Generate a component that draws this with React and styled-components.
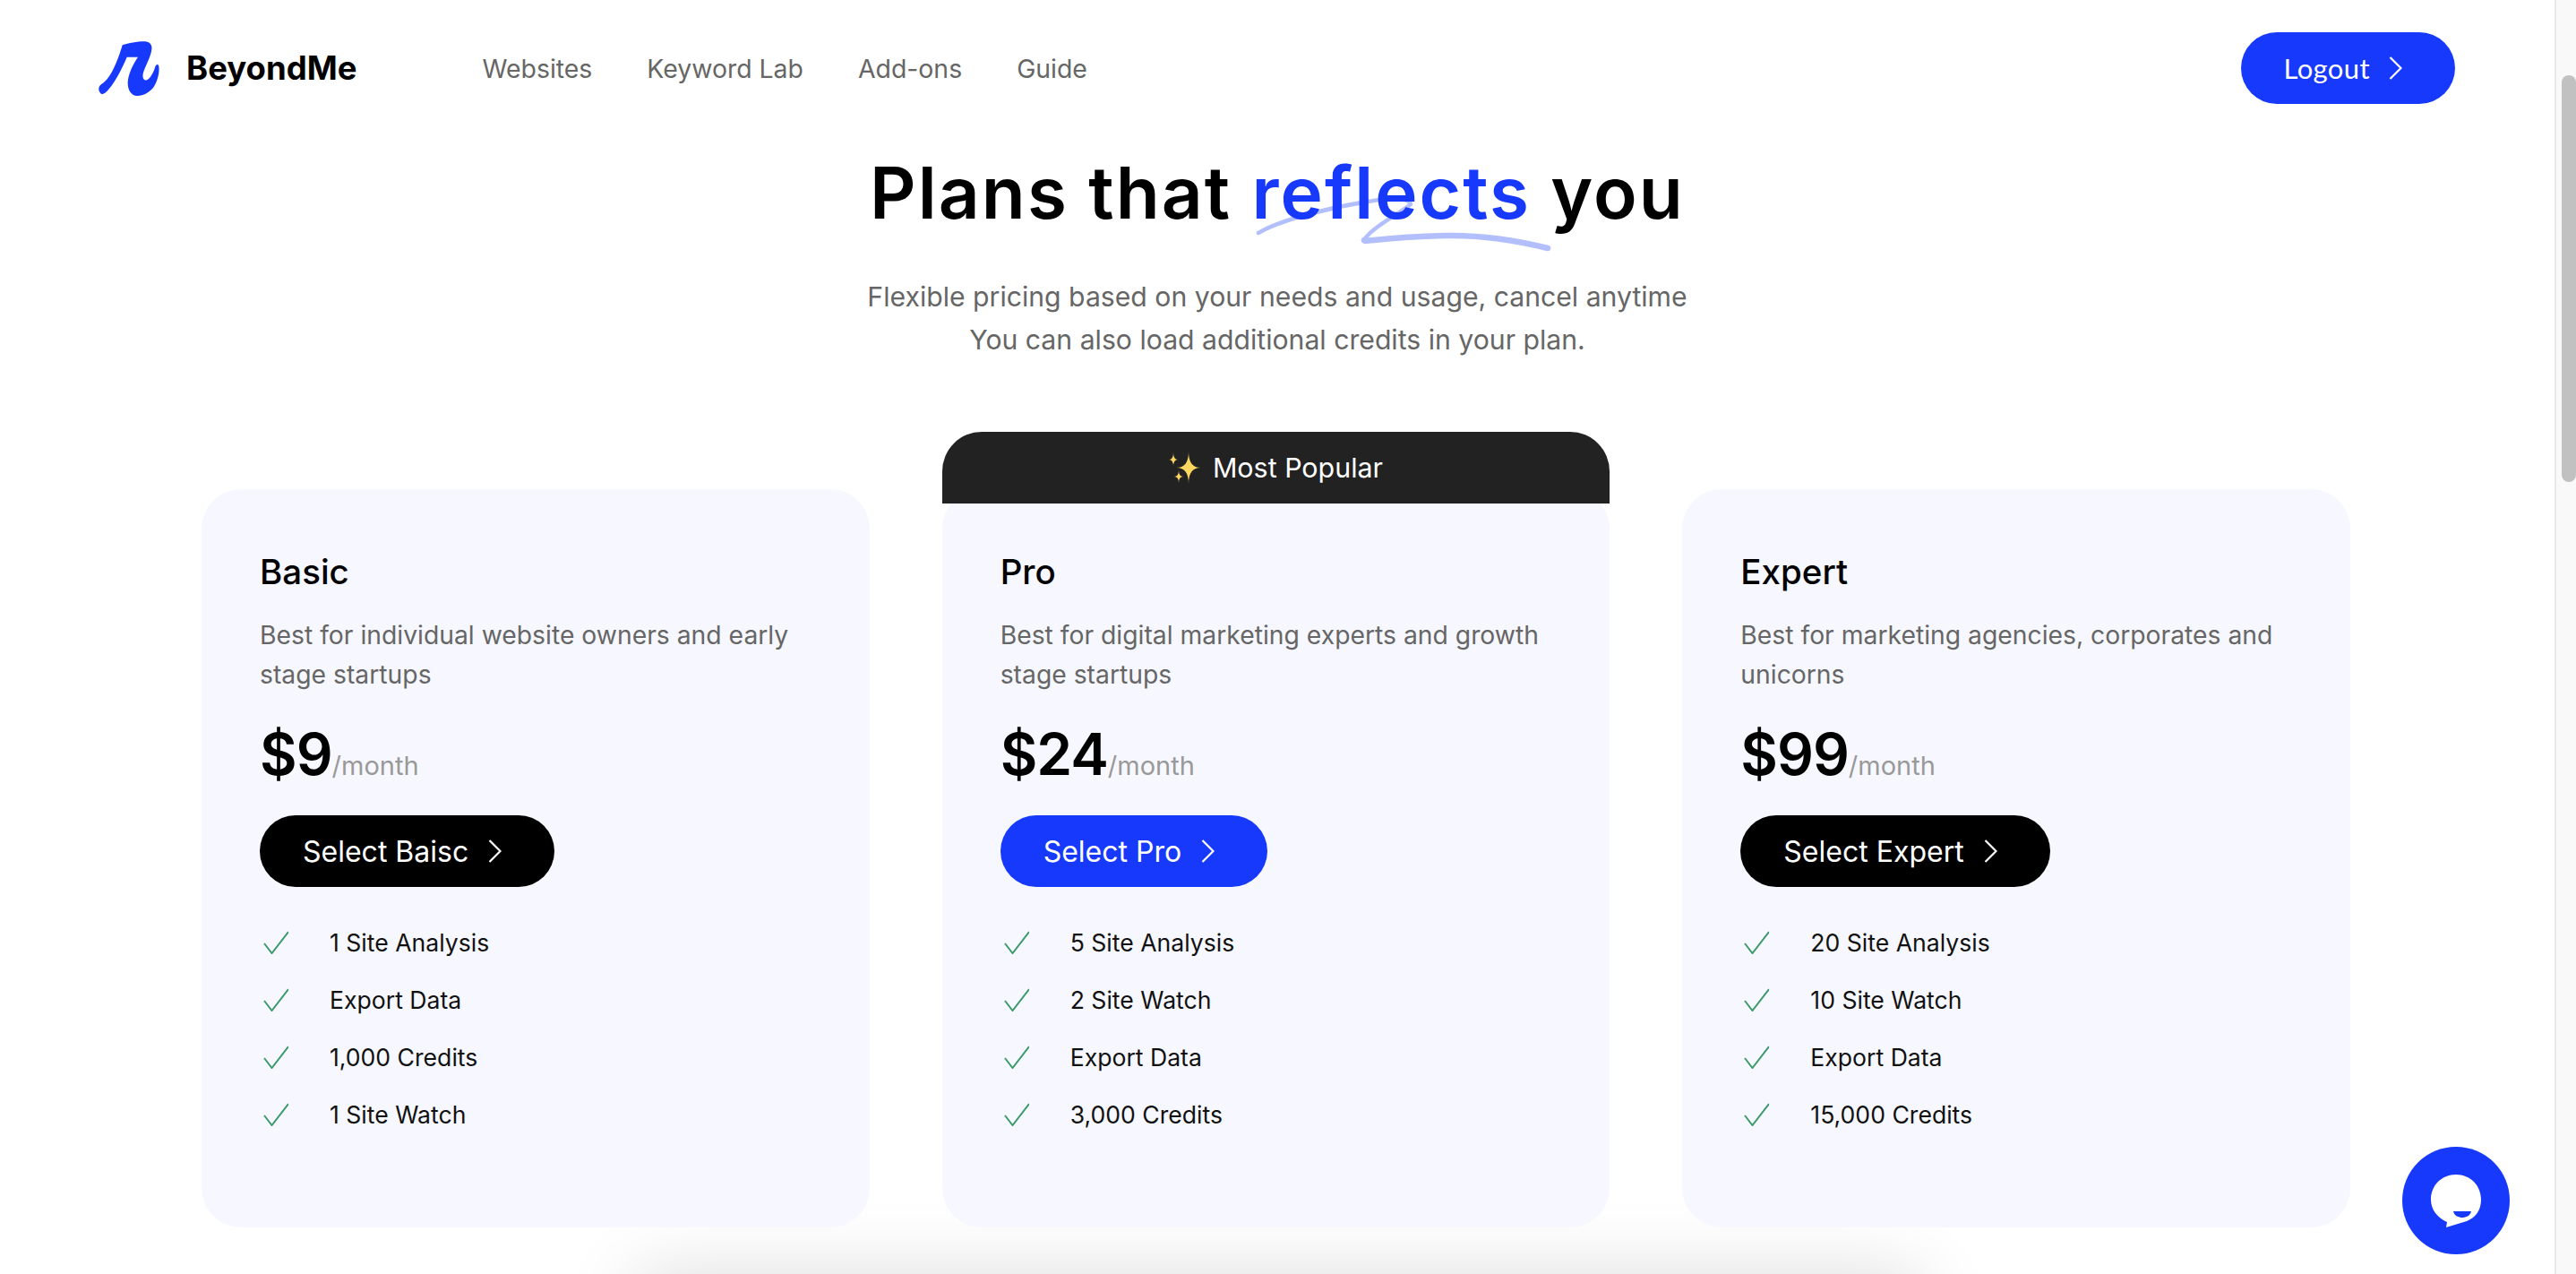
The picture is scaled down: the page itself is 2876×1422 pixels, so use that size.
import React from 'react';
import styled, { createGlobalStyle } from 'styled-components';

const GlobalStyle = createGlobalStyle`
  html, body { margin: 0; padding: 0; height: 100%; background: #fff; }
  body { font-family: Inter, "Liberation Sans", sans-serif; color: #000; }
  * { box-sizing: border-box; }
`;

const BLUE = '#1739fb';
const HEAD_FONT = 'Inter, "Liberation Sans", sans-serif';

const Shell = styled.div`
  display: flex;
  height: 100vh;
  overflow: hidden;
`;

const Main = styled.main`
  flex: 1;
  min-width: 0;
`;

const ScrollTrack = styled.div`
  width: 24px;
  background: #f9f9f9;
  border-left: 2px solid #e8e8e8;
  padding: 84px 0 0 6px;
`;

const ScrollThumb = styled.div`
  width: 16px;
  height: 454px;
  border-radius: 8px;
  background: #c1c1c1;
`;

const Nav = styled.nav`
  display: flex;
  align-items: center;
  height: 152px;
  padding: 0 111px 0 110px;
`;

const Brand = styled.div`
  display: flex;
  align-items: center;
  gap: 30px;
  font-size: 36.5px;
  font-weight: 700;
`;

const NavLinks = styled.div`
  display: flex;
  gap: 61px;
  margin-left: 140px;
  flex: 1;
`;

const NavLink = styled.a`
  font-size: 28.4px;
  color: #666;
`;

const PillButton = styled.button`
  display: inline-flex;
  align-items: center;
  height: 80px;
  border: 0;
  border-radius: 40px;
  color: #fff;
  background: ${p => (p.$dark ? '#000' : BLUE)};
  font-family: Inter, sans-serif;
  font-size: 32px;
  padding: 0 59px 0 48px;
  gap: 22px;
`;

const LogoutButton = styled(PillButton)`
  font-family: Lato, Inter, sans-serif;
  font-size: 31px;
  letter-spacing: 0.4px;
  gap: 21px;
  padding: 0 59px 0 47px;
`;

const CardButton = styled(PillButton)`
  margin-top: 32px;
`;

const Hero = styled.header`
  text-align: center;
`;

const Title = styled.h1`
  margin: 0;
  padding-top: 17px;
  isolation: isolate;
  font-family: ${HEAD_FONT};
  font-size: 80px;
  line-height: 92px;
  font-weight: 600;
  letter-spacing: 2.1px;
`;

const Accent = styled.span`
  position: relative;
  color: ${BLUE};
`;

const Scribble = styled.svg`
  position: absolute;
  left: 3px;
  top: 49px;
  z-index: -1;
  overflow: visible;
`;

const Subtitle = styled.p`
  margin: 46px 0 0;
  font-size: 30.2px;
  line-height: 48px;
  color: #666;
`;

const CardGrid = styled.section`
  display: grid;
  grid-template-columns: repeat(3, 1fr);
  gap: 81px;
  margin-top: 143px;
  padding: 0 228px 0 225px;
`;

const Card = styled.article`
  position: relative;
  height: 824px;
  padding: 68px 65px 0;
  border-radius: 44px;
  background: #f7f8ff;
`;

const PopularBadge = styled.div`
  position: absolute;
  top: -64px;
  left: 0;
  right: 0;
  height: 80px;
  display: flex;
  align-items: center;
  justify-content: center;
  gap: 13px;
  background: #222;
  color: #fff;
  font-size: 30.4px;
  border-radius: 44px 44px 0 0;
`;

const CardName = styled.h2`
  margin: 0;
  font-family: ${HEAD_FONT};
  font-size: 38.5px;
  line-height: 48px;
  font-weight: 500;
`;

const CardText = styled.p`
  margin: 25px 0 0;
  font-size: 28.3px;
  line-height: 44px;
  color: #666;
`;

const PriceRow = styled.div`
  display: flex;
  align-items: baseline;
  margin-top: 31px;
`;

const Price = styled.span`
  font-size: 64px;
  line-height: 72px;
  font-weight: 600;
  letter-spacing: -1px;
`;

const PriceUnit = styled.span`
  font-size: 29px;
  color: #999;
`;

const FeatureList = styled.ul`
  list-style: none;
  margin: 30px 0 0;
  padding: 0;
`;

const Feature = styled.li`
  display: flex;
  align-items: center;
  gap: 46px;
  height: 64px;
  font-size: 26.6px;
  color: #111;
`;

const NextPanel = styled.div`
  width: 1430px;
  height: 300px;
  margin: 53px auto 0;
  background: #eee;
  box-shadow: 0 0 80px 0 rgba(0, 0, 0, 0.14);
`;

const ChatButton = styled.button`
  position: fixed;
  left: 2682px;
  top: 1280px;
  width: 120px;
  height: 120px;
  padding: 0;
  border: 0;
  border-radius: 50%;
  background: ${BLUE};
  display: flex;
  align-items: center;
  justify-content: center;
`;

const Logo = () => (
  <svg width="68" height="62" viewBox="60 42 204 186">
    <path
      fill={BLUE}
      d="M140 58C160 52 190 46 212 46C230 46 240 55 238 72C236 95 218 125 210 150C205 168 212 178 222 175C236 168 246 145 250 130C252 124 258 120 261 126C266 140 260 175 245 198C232 216 210 228 190 228C170 228 158 208 158 185C158 155 178 118 192 98L155 98C142 130 118 178 95 205C85 218 72 228 66 218C58 208 58 194 75 185C100 170 125 110 140 58Z"
    />
  </svg>
);

const Chevron = () => (
  <svg width="15" height="26" viewBox="0 0 15 26" fill="none" stroke="#fff" strokeWidth="2.2">
    <path d="M1.5 1L13.5 13L1.5 25" />
  </svg>
);

const Check = () => (
  <svg width="32" height="26" viewBox="0 0 32 26" fill="none" stroke="#3c9a6a" strokeWidth="2">
    <path d="M5 14L13.5 25L32 1" />
  </svg>
);

const starPath = (cx, cy, rx, ry) =>
  `M${cx} ${cy - ry}Q${cx} ${cy} ${cx + rx} ${cy}Q${cx} ${cy} ${cx} ${cy + ry}Q${cx} ${cy} ${cx - rx} ${cy}Q${cx} ${cy} ${cx} ${cy - ry}Z`;

const Sparkles = () => (
  <svg width="36" height="36" viewBox="0 0 36 36" fill="#fbd75f">
    <path d={starPath(22, 18, 13.5, 18)} />
    <path d={starPath(5, 9, 5, 8)} />
    <path d={starPath(11, 28, 5, 7)} />
  </svg>
);

const plans = [
  {
    name: 'Basic',
    text: 'Best for individual website owners and early stage startups',
    price: '$9',
    cta: 'Select Baisc',
    features: ['1 Site Analysis', 'Export Data', '1,000 Credits', '1 Site Watch'],
  },
  {
    name: 'Pro',
    text: 'Best for digital marketing experts and growth stage startups',
    price: '$24',
    cta: 'Select Pro',
    popular: true,
    features: ['5 Site Analysis', '2 Site Watch', 'Export Data', '3,000 Credits'],
  },
  {
    name: 'Expert',
    text: 'Best for marketing agencies, corporates and unicorns',
    price: '$99',
    cta: 'Select Expert',
    features: ['20 Site Analysis', '10 Site Watch', 'Export Data', '15,000 Credits'],
  },
];

export default function App() {
  return (
    <>
      <GlobalStyle />
      <Shell>
        <Main>
          <Nav>
            <Brand>
              <Logo />
              BeyondMe
            </Brand>
            <NavLinks>
              <NavLink>Websites</NavLink>
              <NavLink>Keyword Lab</NavLink>
              <NavLink>Add-ons</NavLink>
              <NavLink>Guide</NavLink>
            </NavLinks>
            <LogoutButton>
              Logout
              <Chevron />
            </LogoutButton>
          </Nav>

          <Hero>
            <Title>
              Plans that{' '}
              <Accent>
                reflects
                <Scribble width="335" height="70" viewBox="0 0 335 70" fill="none" stroke="#b3bffd" strokeLinecap="round" strokeLinejoin="round">
                  <path strokeWidth="4.5" d="M5 45C30 30 90 15 140 8C160 5 175 8 175 13C160 25 130 40 123 53" />
                  <path strokeWidth="6.5" d="M123 53C122 56 140 50 213 48C260 47 300 55 328 62" />
                </Scribble>
              </Accent>{' '}
              you
            </Title>
            <Subtitle>
              Flexible pricing based on your needs and usage, cancel anytime
              <br />
              You can also load additional credits in your plan.
            </Subtitle>
          </Hero>

          <CardGrid>
            {plans.map(plan => (
              <Card key={plan.name}>
                {plan.popular && (
                  <PopularBadge>
                    <Sparkles />
                    Most Popular
                  </PopularBadge>
                )}
                <CardName>{plan.name}</CardName>
                <CardText>{plan.text}</CardText>
                <PriceRow>
                  <Price>{plan.price}</Price>
                  <PriceUnit>/month</PriceUnit>
                </PriceRow>
                <CardButton $dark={!plan.popular}>
                  {plan.cta}
                  <Chevron />
                </CardButton>
                <FeatureList>
                  {plan.features.map(f => (
                    <Feature key={f}>
                      <Check />
                      {f}
                    </Feature>
                  ))}
                </FeatureList>
              </Card>
            ))}
          </CardGrid>

          <NextPanel />
        </Main>
        <ScrollTrack>
          <ScrollThumb />
        </ScrollTrack>
      </Shell>
      <ChatButton>
        <svg width="60" height="62" viewBox="0 0 60 62">
          <path fill="#fff" d="M30 2C46 2 58 14 58 30C58 42 52 50 42 54L19 61L20 55C9 50 2 41 2 30C2 14 14 2 30 2Z" />
          <path fill={BLUE} d="M27 43L47 43C46 48 41 50 37 50C33 50 28 48 27 43Z" />
        </svg>
      </ChatButton>
    </>
  );
}
